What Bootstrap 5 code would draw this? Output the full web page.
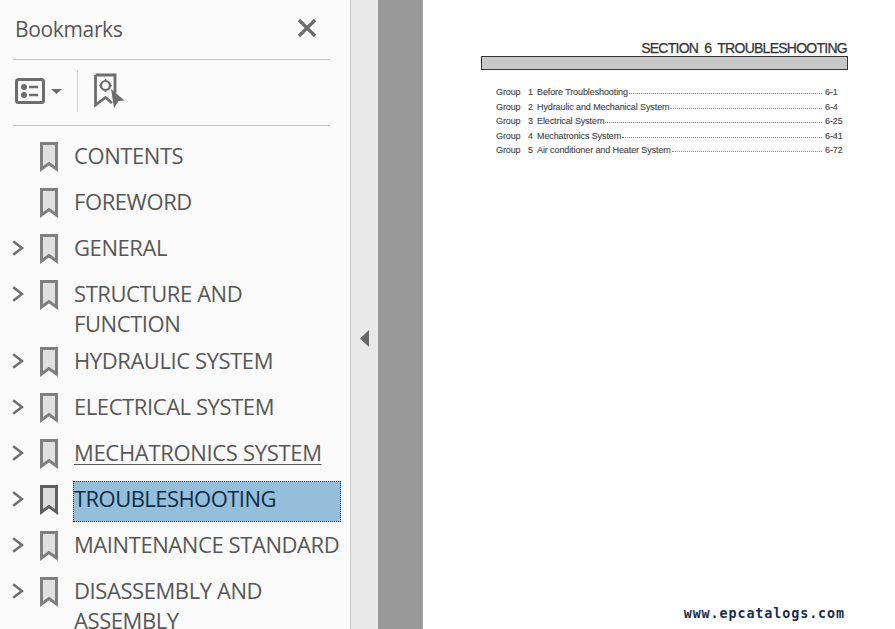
<!DOCTYPE html>
<html lang="en">
<head>
<meta charset="utf-8">
<title>Bookmarks</title>
<link rel="stylesheet" href="https://cdn.jsdelivr.net/npm/bootstrap@5.3.0/dist/css/bootstrap.min.css">
<style>
html,body{height:629px;overflow:hidden;background:#fff}
.viewer{height:629px;width:895px}
.side{width:351px;flex:none;background:#fafafa;border-right:1px solid #c9c9c9;font-family:"Open Sans","Noto Sans",sans-serif;color:#575757;overflow:hidden}
.side-head{height:60px;margin:0 20px 0 13px;border-bottom:1px solid #c4c4c4;padding:15px 0 0 2px}
.side-title{font-size:21px;line-height:28px;letter-spacing:-.35px}
.close-ico{margin:2px 12px 0 0}
.side-tools{height:66px;margin:0 20px 0 13px;border-bottom:1px solid #c4c4c4;padding:0 0 3px 2px}
.tool-sep{width:1px;height:42px;background:#d2d2d2;margin:0 15px 0 14px}
.tree{padding:14px 0 0 0}
.tree-row{min-height:46px;padding-bottom:7px}
.tw{width:40px;height:32px;padding-left:12px;flex:none}
.bm{flex:none;width:34px;margin-top:2px}
.lbl{font-size:22px;line-height:30px;letter-spacing:-.42px;flex:1;min-width:0}
.lbl.on{align-self:flex-start;background:#95bedb;color:#0d2c46;outline:1px dotted #1c2a36;outline-offset:-1px;margin:-2px 9px -9px -1px;padding:2px 0 9px 1px;letter-spacing:-.55px}
.lbl.ul{text-decoration:underline;text-underline-offset:3px;text-decoration-thickness:1px;letter-spacing:-.32px}
.rail{width:27px;flex:none;background:#e9e9e9;padding-top:48px}
.gutter{width:45px;flex:none;background:#999;border-right:1px solid #a9a9a9}
.sheet{flex:1;background:#fff;font-family:"Liberation Sans",Arial,sans-serif;color:#333;padding:40px 47px 0 57px;min-width:0}
.sec-title{font-size:14px;line-height:16px;text-align:right;word-spacing:3px;letter-spacing:-.74px;-webkit-text-stroke:.25px #333;margin:0 1px 0 0}
.sec-bar{height:14px;background:#c8c8c8;border:1px solid #333;margin:0 0 0 1px}
.toc{margin:15px 3px 0 16px;font-size:9px;color:#444;letter-spacing:-.1px;-webkit-text-stroke:.12px #444}
.toc-row{height:14.5px;line-height:14.5px}
.grp{width:32px;flex:none}
.no{width:9px;flex:none}
.dots{flex:1;border-bottom:1px dotted #8a8a8a;height:9px;margin:0 3px 0 1px}
.pg{width:20px;flex:none}
.site{font-family:"DejaVu Sans Mono",monospace;font-weight:700;font-size:13.4px;letter-spacing:.9px;color:#1c2c4c;position:absolute;right:50px;top:605px;line-height:18px}
</style>
</head>
<body class="m-0">
<div class="viewer d-flex position-relative">
  <aside class="side">
    <div class="side-head d-flex justify-content-between align-items-start">
      <div class="side-title">Bookmarks</div>
      <svg class="close-ico" width="22" height="22" viewBox="0 0 22 22" aria-hidden="true"><path d="M3 3 19 19M19 3 3 19" stroke="#6d6d6d" stroke-width="3.2" fill="none"/></svg>
    </div>
    <div class="side-tools d-flex align-items-center">
      <svg width="48" height="28" viewBox="0 0 48 28" aria-hidden="true">
        <rect x="1.5" y="2.5" width="27" height="23" rx="2" fill="none" stroke="#6d6d6d" stroke-width="3"/>
        <circle cx="9" cy="10" r="3" fill="#6d6d6d"/><circle cx="9" cy="18" r="3" fill="#6d6d6d"/>
        <path d="M14 10h9M14 18h9" stroke="#6d6d6d" stroke-width="2.4"/>
        <path d="M36 12h11l-5.500 5z" fill="#6d6d6d"/>
      </svg>
      <div class="tool-sep"></div>
      <svg width="32" height="36" viewBox="0 0 32 36" aria-hidden="true">
        <path d="M2.500 2H22V20M2.500 2V32L12.500 24.500 19 30" fill="#fafafa" stroke="#6d6d6d" stroke-width="2.800"/>
        <circle cx="12.500" cy="12.500" r="4.500" fill="none" stroke="#6d6d6d" stroke-width="2.200"/>
        <path d="M12.500 6v3M12.500 16v3M6 12.500h3M16 12.500h3" stroke="#6d6d6d" stroke-width="1.600"/>
        <path d="M18 16 31.500 27.500 25.500 28 21 35z" fill="#6d6d6d"/>
      </svg>
    </div>
    <ul class="tree list-unstyled m-0" id="tree"></ul>
  </aside>
  <div class="rail d-flex align-items-center justify-content-start">
    <svg class="ms-2" width="10" height="18" viewBox="0 0 10 18" aria-hidden="true"><path d="M10 0V17L1 8.500z" fill="#666"/></svg>
  </div>
  <div class="gutter"></div>
  <main class="sheet">
    <h1 class="sec-title fw-normal">SECTION 6 TROUBLESHOOTING</h1>
    <div class="sec-bar"></div>
    <div class="toc" id="toc"></div>
  </main>
  <div class="site">www.epcatalogs.com</div>
</div>
<script>
var bm=function(c,f){return '<svg class="bm" width="34" height="30" viewBox="0 0 34 30" aria-hidden="true"><path d="M1.500 1.500H16.500V27L9 21.500 1.500 27z" fill="'+f+'" stroke="'+c+'" stroke-width="3" stroke-linejoin="miter"/></svg>'};
var tw='<svg width="12" height="16" viewBox="0 0 12 16" aria-hidden="true"><path d="M1.200 1.200 10 8 1.200 14.800" fill="none" stroke="#6f6f6f" stroke-width="2.600"/></svg>';
var items=[["CONTENTS",0],["FOREWORD",0],["GENERAL",1],["STRUCTURE AND FUNCTION",1],["HYDRAULIC SYSTEM",1],["ELECTRICAL SYSTEM",1],["MECHATRONICS SYSTEM",1,"ul"],["TROUBLESHOOTING",1,"on"],["MAINTENANCE STANDARD",1],["DISASSEMBLY AND ASSEMBLY",1]];
document.getElementById('tree').innerHTML=items.map(function(i){var on=i[2]=='on';
return '<li class="tree-row d-flex"><span class="tw d-flex align-items-center">'+(i[1]?tw:'')+'</span>'+(on?bm('#5f5f5f','#dcdcdc'):bm('#7f7f7f','#e0e0e0'))+'<span class="lbl '+(i[2]||'')+'">'+i[0]+'</span></li>'}).join('');
var toc=[["1","Before Troubleshooting","6-1"],["2","Hydraulic and Mechanical System","6-4"],["3","Electrical System","6-25"],["4","Mechatronics System","6-41"],["5","Air conditioner and Heater System","6-72"]];
document.getElementById('toc').innerHTML=toc.map(function(t){return '<div class="toc-row d-flex"><span class="grp">Group</span><span class="no">'+t[0]+'</span><span>'+t[1]+'</span><span class="dots"></span><span class="pg">'+t[2]+'</span></div>'}).join('');
</script>
<script src="https://cdn.jsdelivr.net/npm/bootstrap@5.3.0/dist/js/bootstrap.bundle.min.js"></script>
</body>
</html>
